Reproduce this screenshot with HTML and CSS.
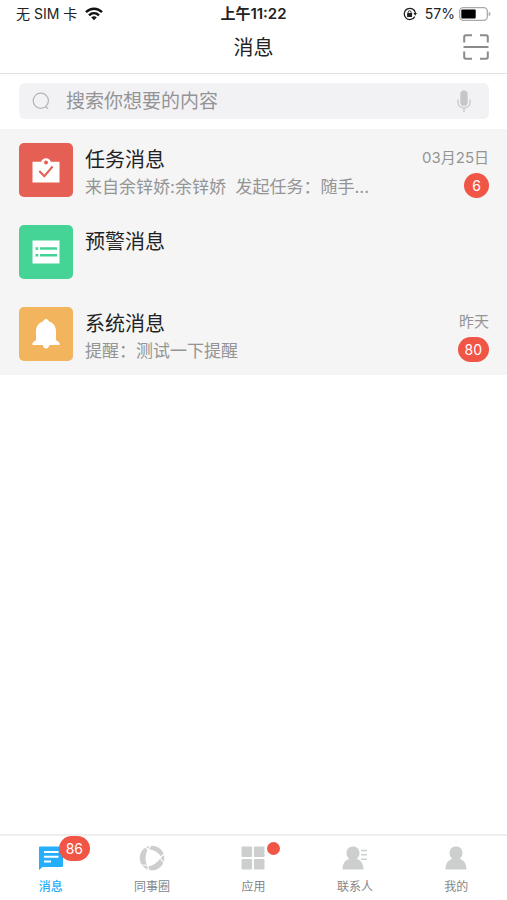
FILE: index.html
```html
<!DOCTYPE html>
<html lang="zh-CN">
<head>
<meta charset="utf-8">
<meta name="viewport" content="width=device-width, initial-scale=1">
<title>消息</title>
<link rel="stylesheet" href="styles.css">
</head>
<body>
<div class="app">
  <div class="status">
    <div class="status-side">
      <span>无 SIM 卡</span>
      <svg width="18" height="14" viewBox="0 0 18 14" fill="none" stroke="#111" stroke-width="2.4">
        <path d="M1 5.2C5.5.6 12.5.6 17 5.2M4 8.3c2.900-2.800 7.100-2.800 10 0"/>
        <path d="M6.200 10.300c1.700-1.500 3.900-1.500 5.600 0L9 13.200z" fill="#111" stroke="none"/>
      </svg>
    </div>
    <strong class="clock">上午11:22</strong>
    <div class="status-side status-end">
      <svg width="14" height="14" viewBox="0 0 14 14" fill="none" stroke="#222">
        <path d="M11.800 9.600A5.600 5.600 0 1 1 12.400 6" stroke-width="1.300"/>
        <path d="M10.400 6h3.600l-1.800 2.800z" fill="#222" stroke="none"/>
        <rect x="4.100" y="6.100" width="5" height="3.900" rx=".5" fill="#222" stroke="none"/>
        <path d="M5.100 6.500V5.300a1.500 1.500 0 0 1 3 0v1.200"/>
      </svg>
      <span class="percent">57%</span>
      <svg width="32" height="14" viewBox="0 0 32 14">
        <rect x=".7" y=".7" width="27.600" height="12.600" rx="3.500" fill="#fff" stroke="#aaa" stroke-width="1.300"/>
        <rect x="2.300" y="2.400" width="14.400" height="9.200" rx="1" fill="#000"/>
        <path d="M29.700 4.800c2.400.8 2.400 3.600 0 4.400z" fill="#aaa"/>
      </svg>
    </div>
  </div>

  <header class="header">
    <h1>消息</h1>
    <button class="scan" type="button" aria-label="扫一扫">
      <svg width="26" height="26" viewBox="0 0 26 26" fill="none" stroke="#8b8b8b" stroke-width="2">
        <path d="M1.200 8.500V3q0-1.800 1.800-1.800h6M17 1.200h6q1.800 0 1.800 1.800v5.500M1.200 17.500V23q0 1.800 1.800 1.800h6M17 24.800h6q1.800 0 1.800-1.800v-5.500M.5 13h25"/>
      </svg>
    </button>
  </header>

  <main class="main">
    <form class="search" role="search">
      <svg width="18" height="18" viewBox="0 0 18 18" fill="none" stroke="#b4b4b6" stroke-width="1.200">
        <circle cx="8.800" cy="8.800" r="7.600"/><path d="M13.500 14.500l2.600 2.400"/>
      </svg>
      <input type="text" aria-label="搜索" placeholder="搜索你想要的内容">
      <button type="button" aria-label="语音输入">
        <svg width="14" height="22" viewBox="0 0 14 22" fill="none">
          <rect x="3.300" y=".5" width="7.400" height="15.500" rx="3.700" fill="#c6c6c8"/>
          <path d="M1 9.500v3c0 3.200 2.500 5.300 6 5.300s6-2.100 6-5.300v-3M7 17.800V22" stroke="#d2d2d4" stroke-width="1.800"/>
        </svg>
      </button>
    </form>

    <ul class="list">
      <li class="row">
        <div class="tile red">
          <svg width="28" height="28" viewBox="0 0 28 28">
            <path d="M.5 5.800h8.700a5 5 0 0 1 9.600 0h8.700V26.500H.5z" fill="#fff"/>
            <circle cx="14" cy="6.500" r="2" fill="#e55f55"/>
            <path d="M7.300 15l5 5.200 8.300-9.700" fill="none" stroke="#e55f55" stroke-width="2"/>
          </svg>
        </div>
        <div class="text"><h2>任务消息</h2><p>来自余锌娇:余锌娇&nbsp; 发起任务：随手...</p></div>
        <div class="meta"><time>03月25日</time><span class="badge">6</span></div>
      </li>
      <li class="row">
        <div class="tile green">
          <svg width="28" height="28" viewBox="0 0 28 28">
            <path d="M.5 2.500h27v23H.5z" fill="#fff"/>
            <path d="M3.500 9.300h2.800v2.400H3.500zM8 9.300h17v2.400H8zM3.500 16h2.800v2.600H3.500zM8 16h17v2.600H8z" fill="#46d396"/>
          </svg>
        </div>
        <div class="text"><h2>预警消息</h2></div>
      </li>
      <li class="row">
        <div class="tile orange">
          <svg width="28" height="30" viewBox="0 0 28 30" fill="#fff">
            <path d="M14 0c1.500 0 2.300 1 2.800 2.200 4.300 1.400 7.200 5 7.200 9.800v9l3.500 2.700V26h-10c-.5 2-1.700 3.400-3.500 3.400S11 28 10.500 26H.5v-2.300L4 21v-9c0-4.800 2.900-8.400 7.200-9.800C11.700 1 12.500 0 14 0z"/>
          </svg>
        </div>
        <div class="text"><h2>系统消息</h2><p>提醒：测试一下提醒</p></div>
        <div class="meta"><time>昨天</time><span class="badge">80</span></div>
      </li>
    </ul>
  </main>

  <nav class="tabs">
    <a class="tab active" href="#messages">
      <span class="glyph">
        <svg width="24" height="24" viewBox="0 0 24 24">
          <path d="M0 1.500Q0 .5 1 .5h22q1 0 1 1V20q0 1-1 1H3.500L0 24z" fill="#24aefb"/>
          <path d="M5 6h14.500M5 10.800h14.500M5 15.500h7" stroke="#fff" stroke-width="1.900"/>
        </svg>
        <span class="badge tab-badge">86</span>
      </span>
      <span>消息</span>
    </a>
    <a class="tab" href="#circle">
      <span class="glyph">
        <svg width="26" height="26" viewBox="0 0 26 26">
          <circle cx="13" cy="13" r="12.300" fill="#cdcfcf"/>
          <path d="M8.500 4.800Q9.300 4 10.500 4.300Q18 6 21.800 11.200Q22.600 12.600 21.400 13.600Q16.500 20 10 21.300Q8.300 21.400 7.800 20Q5 12 8.500 4.800z" fill="#fff"/>
          <path d="M9.500 5L5.800 1.800M21 12.500l3.800 5.500M9 20.500l-6.500-.5M21.500 12L25.500 9M8.500 20l1.500 6M9 5l3-5" stroke="#fff" stroke-width="1.200"/>
        </svg>
      </span>
      <span>同事圈</span>
    </a>
    <a class="tab" href="#apps">
      <span class="glyph">
        <svg width="24" height="24" viewBox="0 0 24 24" fill="#cdcfcf">
          <rect x=".5" y=".5" width="10.600" height="10.600" rx="1"/><rect x="12.900" y=".5" width="10.600" height="10.600" rx="1"/>
          <rect x=".5" y="12.900" width="10.600" height="10.600" rx="1"/><rect x="12.900" y="12.900" width="10.600" height="10.600" rx="1"/>
        </svg>
        <span class="dot"></span>
      </span>
      <span>应用</span>
    </a>
    <a class="tab" href="#contacts">
      <span class="glyph">
        <svg width="26" height="24" viewBox="0 0 26 24" fill="#cdcfcf">
          <path d="M11 .5c4 0 6.500 2.700 6.500 6.500 0 2.300-1.100 4.700-2.800 6 4.300 1.200 6.800 4.800 6.800 10.500H.5c0-5.700 2.500-9.300 6.800-10.500C5.600 11.700 4.500 9.300 4.500 7 4.500 3.200 7 .5 11 .5z"/>
          <path d="M19 4.500h6M19 8.800h6M19 13.200h6" stroke="#cdcfcf" stroke-width="1.400"/>
        </svg>
      </span>
      <span>联系人</span>
    </a>
    <a class="tab" href="#me">
      <span class="glyph">
        <svg width="22" height="24" viewBox="0 0 22 24" fill="#cdcfcf">
          <path d="M11 .5c4 0 6.500 2.700 6.500 6.500 0 2.300-1.100 4.700-2.800 6 4.300 1.200 6.800 4.800 6.800 10.500H.5c0-5.700 2.500-9.300 6.800-10.500C5.600 11.700 4.500 9.300 4.500 7 4.500 3.200 7 .5 11 .5z"/>
        </svg>
      </span>
      <span>我的</span>
    </a>
  </nav>
</div>
</body>
</html>
```
FILE: styles.css
```css
* {
  box-sizing: border-box;
}

body {
  margin: 0;
  background: #fff;
  color: #222;
  font-family: Inter, "Noto Sans CJK SC", sans-serif;
}

h1, h2, p, ul {
  margin: 0;
  padding: 0;
  font-weight: 400;
}

button {
  display: flex;
  padding: 0;
  border: 0;
  background: none;
}

svg {
  display: block;
  flex: none;
}

.app {
  display: flex;
  flex-direction: column;
  min-height: 100vh;
}

.status {
  display: grid;
  grid-template-columns: 1fr auto 1fr;
  align-items: center;
  height: 28px;
  padding: 0 16px;
  font-size: 14px;
  line-height: 20px;
}

.status-side {
  display: flex;
  align-items: center;
  gap: 8px;
}

.status-end {
  justify-content: flex-end;
}

.percent {
  margin-right: -4px;
}

.clock {
  font-size: 15px;
  font-weight: 600;
}

.header {
  display: grid;
  grid-template-columns: 1fr auto 1fr;
  align-items: center;
  height: 46px;
  padding: 0 18px 8px;
  border-bottom: 1px solid #e2e2e2;
}

.header h1 {
  grid-column: 2;
  padding-top: 2px;
  font-size: 20px;
  line-height: 28px;
}

.scan {
  justify-self: end;
}

.main {
  flex: 1;
}

.search {
  display: flex;
  align-items: center;
  gap: 16px;
  height: 36px;
  margin: 9px 18px 10px 19px;
  padding: 0 18px 0 13px;
  border-radius: 6px;
  background: #f2f2f4;
}

.search input {
  flex: 1;
  min-width: 0;
  padding: 2px 0 0;
  border: 0;
  outline: 0;
  background: none;
  font: inherit;
  font-size: 19px;
  line-height: 28px;
}

.search input::placeholder {
  color: #949496;
}

.list {
  list-style: none;
  background: #f5f5f5;
}

.row {
  display: flex;
  gap: 12px;
  height: 82px;
  padding: 14px 18px 14px 19px;
}

.tile {
  display: flex;
  flex: none;
  align-items: center;
  justify-content: center;
  width: 54px;
  height: 54px;
  border-radius: 5px;
}

.red {
  background: #e55f55;
}

.green {
  background: #46d396;
}

.orange {
  background: #f2b45c;
}

.text {
  flex: 1;
  min-width: 0;
  padding-top: 2px;
}

.text h2 {
  font-size: 20px;
  line-height: 30px;
}

.text p {
  overflow: hidden;
  color: #949494;
  font-size: 17px;
  line-height: 24px;
  text-overflow: ellipsis;
  white-space: nowrap;
}

.meta {
  display: flex;
  flex-direction: column;
  align-items: flex-end;
  color: #949494;
  font-size: 15px;
  line-height: 30px;
}

.badge {
  min-width: 25px;
  height: 25px;
  padding: 0 7px;
  border-radius: 13px;
  background: #f05545;
  color: #fff;
  font-size: 14px;
  font-weight: 400;
  line-height: 25px;
  text-align: center;
}

.tabs {
  display: grid;
  grid-template-columns: repeat(5, 1fr);
  height: 66px;
  border-top: 2px solid #eee;
}

.tab {
  display: flex;
  flex-direction: column;
  align-items: center;
  gap: 7px;
  padding-top: 9px;
  color: #858585;
  font-size: 12px;
  line-height: 18px;
  text-decoration: none;
}

.active {
  color: #24aefb;
  font-weight: 500;
}

.glyph {
  display: flex;
  position: relative;
  align-items: center;
  height: 26px;
}

.tab-badge {
  position: absolute;
  top: -9px;
  left: 20px;
}

.dot {
  position: absolute;
  top: -3px;
  left: 26px;
  width: 13px;
  height: 13px;
  border-radius: 50%;
  background: #f05545;
}
```
